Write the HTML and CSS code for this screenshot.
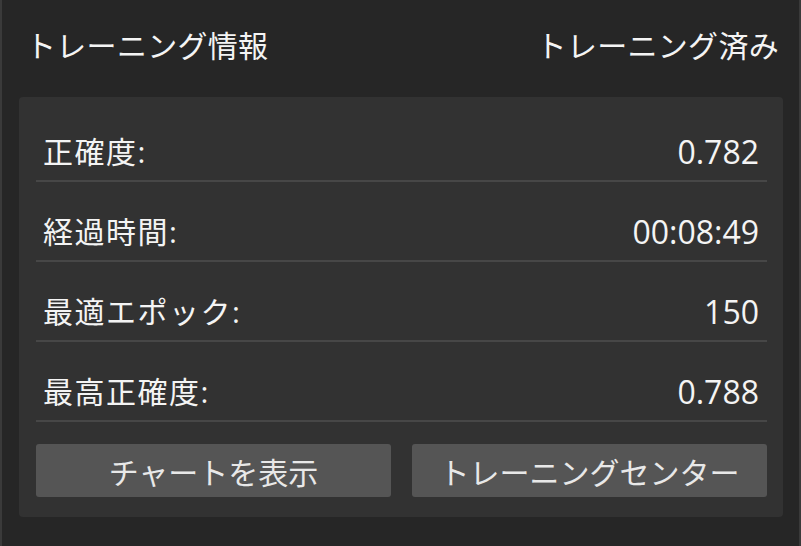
FILE: index.html
```html
<!DOCTYPE html>
<html lang="ja">
<head>
<meta charset="utf-8">
<link rel="stylesheet" href="styles.css">
</head>
<body>
<div class="panel">
  <header class="head">
    <span class="title">トレーニング情報</span>
    <span class="status">トレーニング済み</span>
  </header>
  <section class="card">
    <div class="row"><span class="label">正確度:</span><span class="value">0.782</span></div>
    <div class="row"><span class="label">経過時間:</span><span class="value">00:08:49</span></div>
    <div class="row"><span class="label">最適エポック:</span><span class="value">150</span></div>
    <div class="row"><span class="label">最高正確度:</span><span class="value">0.788</span></div>
    <div class="actions">
      <button class="btn">チャートを表示</button>
      <button class="btn">トレーニングセンター</button>
    </div>
  </section>
</div>
</body>
</html>
```
FILE: styles.css
```css
* { box-sizing: border-box; }
html, body { margin: 0; padding: 0; background: #262626; }
body {
  width: 801px;
  height: 546px;
  overflow: hidden;
  font-family: "Open Sans", "Noto Sans CJK JP", sans-serif;
  color: #f4f4f4;
}
.panel {
  height: 546px;
  border-left: 2px solid #3a3a3a;
  border-right: 2px solid #3a3a3a;
  padding: 0 16px 0 17px;
}
.head {
  display: flex;
  justify-content: space-between;
  align-items: center;
  height: 97px;
  padding: 0 4px 6px 7px;
  font-size: 30px;
  line-height: 36px;
  letter-spacing: 0.3px;
}
.card {
  background: #323232;
  border-radius: 4px;
  padding: 5px 16px 20px 17px;
}
.row {
  display: flex;
  justify-content: space-between;
  align-items: center;
  height: 80px;
  padding: 35px 8px 13px 7px;
  border-bottom: 2px solid #474747;
  font-size: 30px;
  line-height: 30px;
}
.label { letter-spacing: 1.5px; }
.value { font-size: 32px; }
.actions {
  display: flex;
  gap: 21px;
  margin-top: 22px;
}
.btn {
  flex: 1;
  height: 53px;
  background: #555555;
  border: none;
  border-radius: 3px;
  color: #e8e8e8;
  font-family: inherit;
  font-size: 30px;
  padding: 0;
}
```
